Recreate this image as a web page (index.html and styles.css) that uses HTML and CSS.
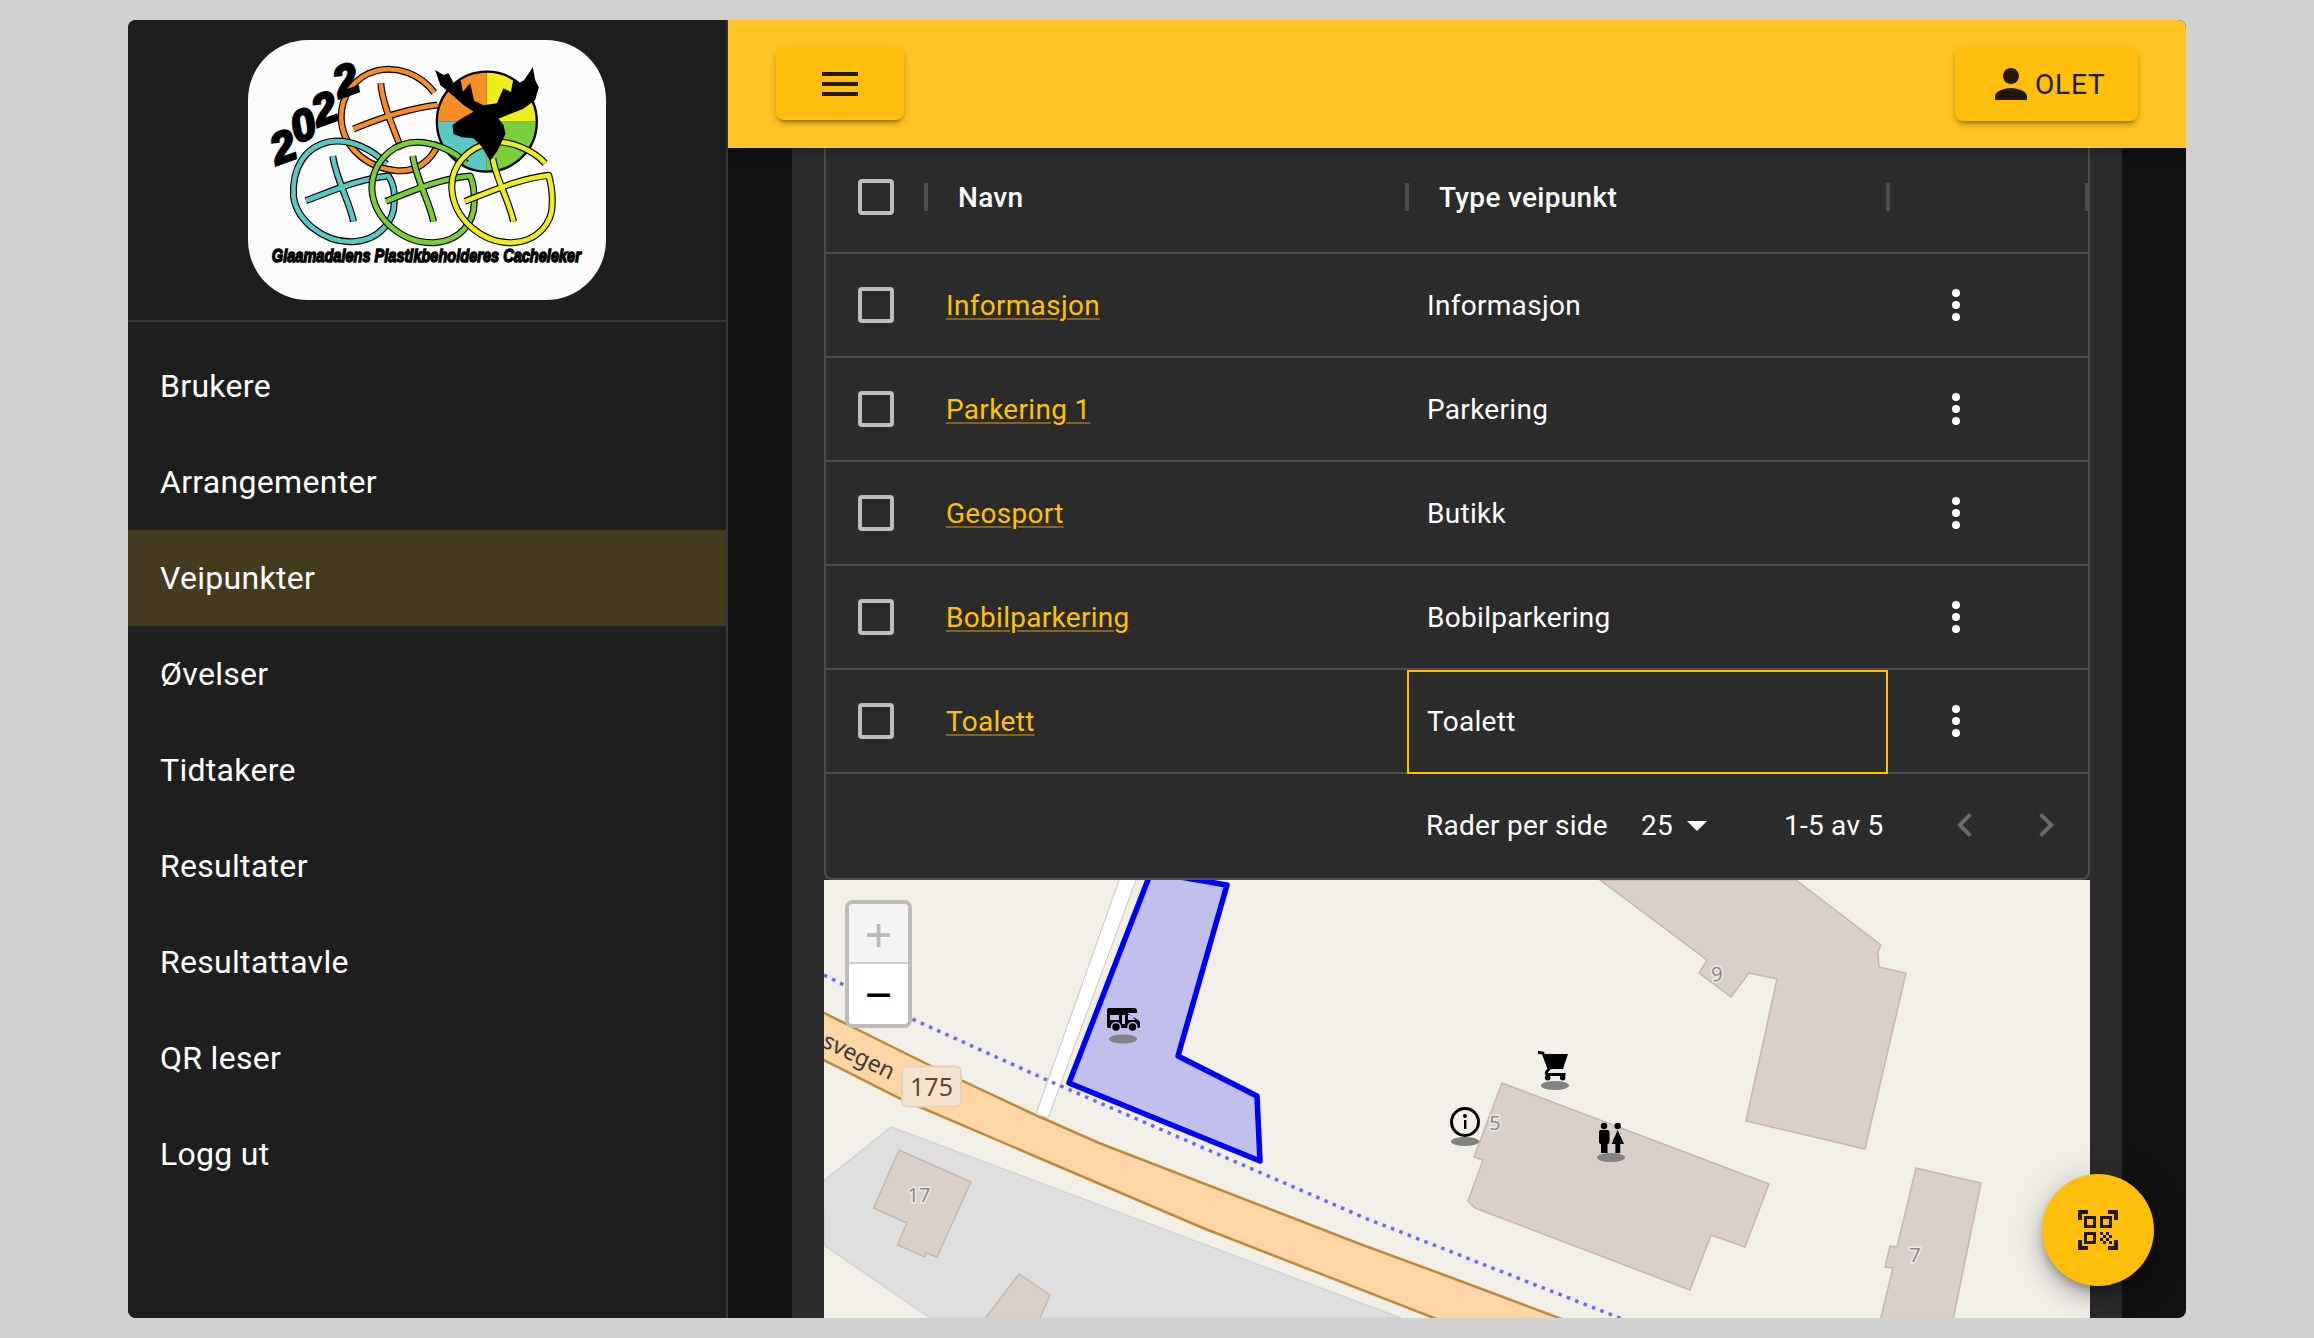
FILE: index.html
```html
<!DOCTYPE html>
<html lang="no">
<head>
<meta charset="utf-8">
<title>Veipunkter</title>
<link rel="stylesheet" href="styles.css">
</head>
<body>
<div class="app">
  <aside class="sidebar">
    <div class="logo-wrap">
      <div class="logo">
        <svg class="logo-svg" viewBox="24 30 1073 780" width="358" height="260" aria-label="Logo">
          <!-- wheel -->
          <ellipse cx="740" cy="275" rx="150" ry="150" class="lg-wheel-o"/>
          <path d="M740 275V125A150 150 0 0 0 590 275Z" class="f-orange"/>
          <path d="M740 275V125A150 150 0 0 1 890 275Z" class="f-yellow"/>
          <path d="M740 275H590A150 150 0 0 0 740 425Z" class="f-teal"/>
          <path d="M740 275H890A150 150 0 0 1 740 425Z" class="f-green"/>
          <ellipse cx="740" cy="275" rx="150" ry="150" class="lg-wheel-s"/>
          <!-- orange -->
          <g class="s-out">
            <path d="M582 188C540 130 470 108 410 122C340 140 303 200 303 262C305 345 372 412 470 422C530 426 572 392 597 338"/>
            <path d="M422 160C426 220 462 300 484 358"/><path d="M340 297C400 272 500 236 592 225"/>
          </g>
          <g class="s-in c-orange">
            <path d="M582 188C540 130 470 108 410 122C340 140 303 200 303 262C305 345 372 412 470 422C530 426 572 392 597 338"/>
            <path d="M422 160C426 220 462 300 484 358"/><path d="M340 297C400 272 500 236 592 225"/>
          </g>
          <!-- teal -->
          <g class="s-out">
            <path d="M438 402C400 360 330 325 270 335C190 350 155 420 160 500C170 570 250 640 340 635C420 630 462 570 462 520C465 490 460 460 445 438C360 445 270 485 197 512"/>
            <path d="M278 378C285 440 330 520 340 575"/>
          </g>
          <g class="s-in c-teal">
            <path d="M438 402C400 360 330 325 270 335C190 350 155 420 160 500C170 570 250 640 340 635C420 630 462 570 462 520C465 490 460 460 445 438C360 445 270 485 197 512"/>
            <path d="M278 378C285 440 330 520 340 575"/>
          </g>
          <!-- green -->
          <g class="s-out">
            <path d="M678 400C640 360 570 330 510 338C440 350 395 410 395 475C400 570 490 640 580 638C660 635 702 575 702 520C703 490 700 460 690 438C600 445 510 485 437 514"/>
            <path d="M518 378C525 440 570 520 580 575"/>
          </g>
          <g class="s-in c-green">
            <path d="M678 400C640 360 570 330 510 338C440 350 395 410 395 475C400 570 490 640 580 638C660 635 702 575 702 520C703 490 700 460 690 438C600 445 510 485 437 514"/>
            <path d="M518 378C525 440 570 520 580 575"/>
          </g>
          <!-- yellow -->
          <g class="s-out">
            <path d="M915 400C880 360 810 332 760 336C680 350 632 410 635 475C640 570 730 640 815 638C895 635 938 575 936 520C938 490 932 460 926 436C840 445 750 485 674 514"/>
            <path d="M758 385C765 440 810 520 820 575"/>
          </g>
          <g class="s-in c-yellow">
            <path d="M915 400C880 360 810 332 760 336C680 350 632 410 635 475C640 570 730 640 815 638C895 635 938 575 936 520C938 490 932 460 926 436C840 445 750 485 674 514"/>
            <path d="M758 385C765 440 810 520 820 575"/>
          </g>
          <!-- moose -->
          <polygon class="f-black" points="585,120 610,135 625,130 640,158 662,152 668,185 690,160 702,212 730,226 770,220 790,175 812,186 820,146 835,160 852,150 878,112 885,150 896,172 885,210 850,236 800,256 775,266 790,285 796,312 780,345 770,365 750,392 725,350 700,325 665,322 640,312 637,285 665,265 700,245 670,225 630,190 600,165"/>
          <text class="lg-year" x="110 170 234 298" y="405 340 290 205" rotate="-20">2022</text>
          <text class="lg-cap" transform="translate(95 696) scale(1 1.300)" textLength="927" lengthAdjust="spacingAndGlyphs">Glaamadalens Plastikbeholderes Cacheleker</text>
        </svg>
      </div>
    </div>
    <nav class="nav">
      <a class="nav-item">Brukere</a>
      <a class="nav-item">Arrangementer</a>
      <a class="nav-item active">Veipunkter</a>
      <a class="nav-item">Øvelser</a>
      <a class="nav-item">Tidtakere</a>
      <a class="nav-item">Resultater</a>
      <a class="nav-item">Resultattavle</a>
      <a class="nav-item">QR leser</a>
      <a class="nav-item">Logg ut</a>
    </nav>
  </aside>

  <main class="main">
    <header class="topbar">
      <button class="tb-btn menu-btn" aria-label="Meny">
        <svg class="icon48" viewBox="0 0 24 24"><path d="M3 18h18v-2H3v2zm0-5h18v-2H3v2zm0-7v2h18V6H3z"/></svg>
      </button>
      <button class="tb-btn user-btn">
        <svg class="icon48" viewBox="0 0 24 24"><path d="M12 12c2.21 0 4-1.79 4-4s-1.79-4-4-4-4 1.79-4 4 1.79 4 4 4zm0 2c-2.67 0-8 1.34-8 4v2h16v-2c0-2.66-5.33-4-8-4z"/></svg>
        <span>OLET</span>
      </button>
    </header>

    <div class="content">
      <section class="panel">
        <div class="table">
          <div class="row head">
            <div class="cell sep"><span class="check"></span></div>
            <div class="cell sep title">Navn</div>
            <div class="cell sep title">Type veipunkt</div>
            <div class="cell sep"></div>
          </div>
          <div class="row">
            <div class="cell"><span class="check"></span></div>
            <div class="cell text"><a class="link">Informasjon</a></div>
            <div class="cell text">Informasjon</div>
            <div class="cell actions"><svg class="icon48 white" viewBox="0 0 24 24"><circle cx="12" cy="6" r="2"/><circle cx="12" cy="12" r="2"/><circle cx="12" cy="18" r="2"/></svg></div>
          </div>
          <div class="row">
            <div class="cell"><span class="check"></span></div>
            <div class="cell text"><a class="link">Parkering 1</a></div>
            <div class="cell text">Parkering</div>
            <div class="cell actions"><svg class="icon48 white" viewBox="0 0 24 24"><circle cx="12" cy="6" r="2"/><circle cx="12" cy="12" r="2"/><circle cx="12" cy="18" r="2"/></svg></div>
          </div>
          <div class="row">
            <div class="cell"><span class="check"></span></div>
            <div class="cell text"><a class="link">Geosport</a></div>
            <div class="cell text">Butikk</div>
            <div class="cell actions"><svg class="icon48 white" viewBox="0 0 24 24"><circle cx="12" cy="6" r="2"/><circle cx="12" cy="12" r="2"/><circle cx="12" cy="18" r="2"/></svg></div>
          </div>
          <div class="row">
            <div class="cell"><span class="check"></span></div>
            <div class="cell text"><a class="link">Bobilparkering</a></div>
            <div class="cell text">Bobilparkering</div>
            <div class="cell actions"><svg class="icon48 white" viewBox="0 0 24 24"><circle cx="12" cy="6" r="2"/><circle cx="12" cy="12" r="2"/><circle cx="12" cy="18" r="2"/></svg></div>
          </div>
          <div class="row">
            <div class="cell"><span class="check"></span></div>
            <div class="cell text"><a class="link">Toalett</a></div>
            <div class="cell text focus">Toalett</div>
            <div class="cell actions"><svg class="icon48 white" viewBox="0 0 24 24"><circle cx="12" cy="6" r="2"/><circle cx="12" cy="12" r="2"/><circle cx="12" cy="18" r="2"/></svg></div>
          </div>
          <div class="pager">
            <span class="pg-label">Rader per side</span>
            <span class="pg-select">25<svg class="icon48 white" viewBox="0 0 24 24"><path d="M7 10l5 5 5-5z"/></svg></span>
            <span class="pg-range">1-5 av 5</span>
            <span class="pg-btn"><svg class="icon48 dim" viewBox="0 0 24 24"><path d="M15.41 7.41 14 6l-6 6 6 6 1.41-1.41L10.83 12z"/></svg></span>
            <span class="pg-btn"><svg class="icon48 dim" viewBox="0 0 24 24"><path d="M10 6 8.59 7.41 13.17 12l-4.58 4.59L10 18l6-6z"/></svg></span>
          </div>
        </div>

        <div class="map">
          <svg class="map-svg" viewBox="824 880 1266 438" width="1266" height="438">
            <polygon class="landuse" points="891,1127 1401,1318 930,1318 824,1245 824,1210 800,1200"/>
            <polygon class="bld" points="899,1150 971,1182 937,1257 926,1253 925,1257 897.5,1245 907,1223 873.6,1208"/>
            <polygon class="bld" points="1019,1274 1050,1295 1037,1325 980,1325"/>
            <polygon class="bld" points="1600,880 1796,880 1881,945 1878,952 1879,967 1906,973 1865,1149 1746,1121 1777,979 1749,973 1731,997 1699,973 1707,960"/>
            <polygon class="bld" points="1502,1083 1769,1184 1745,1247 1711,1235 1690,1290 1475,1208 1468,1201 1483,1160 1474,1157"/>
            <polygon class="bld" points="1916,1168 1981,1183 1952,1325 1879,1325 1893,1268 1885,1267 1890,1246 1897,1247"/>
            <polygon class="road" points="810,1006 931,1066 1031,1113 1099,1143 1360,1244 1447,1276 1575,1324 1470,1332 1203,1228 1039,1158 899,1098 810,1053"/>
            <polygon class="foot" points="1122,872 1139,872 1048,1118 1036,1114"/>
            <polyline class="dots" points="824,975 910,1018 1047,1080 1365,1218 1630,1322"/>
            <polygon class="area" points="1069,1083 1151,872 1227,885 1178,1056 1257,1096 1260,1161"/>
            <text class="lbl-road" transform="translate(890 1080) rotate(26)" text-anchor="end">esvegen</text>
            <rect class="shield" x="902" y="1066.500" width="59" height="40" rx="5"/>
            <text class="lbl-shield" x="931.500" y="1096" text-anchor="middle">175</text>
            <text class="lbl-no" x="919" y="1202" text-anchor="middle">17</text>
            <text class="lbl-no" x="1717" y="981" text-anchor="middle" transform="rotate(-4 1717 974)">9</text>
            <text class="lbl-no" x="1495" y="1130" text-anchor="middle">5</text>
            <text class="lbl-no" x="1915" y="1262" text-anchor="middle">7</text>
            <!-- markers -->
            <ellipse class="shadow" cx="1123" cy="1039" rx="14" ry="4.500"/>
            <ellipse class="shadow" cx="1465" cy="1141.500" rx="14" ry="4.500"/>
            <ellipse class="shadow" cx="1555" cy="1085.500" rx="14" ry="4.500"/>
            <ellipse class="shadow" cx="1611" cy="1157.500" rx="14" ry="4.500"/>
            <!-- camper -->
            <g class="mk">
              <path fill-rule="evenodd" d="M1109 1008H1134Q1137 1008 1137 1011V1013H1127L1138 1020Q1140 1021 1140 1023V1027Q1140 1028 1138 1028H1108Q1107 1028 1107 1026V1010Q1107 1008 1109 1008ZM1110 1015V1020H1119V1015ZM1122 1015V1024H1125V1015ZM1128 1015V1020H1135.500L1131 1015Z"/>
              <circle cx="1116" cy="1027" r="4.500" class="mk-ring"/>
              <circle cx="1132.500" cy="1027" r="4.500" class="mk-ring"/>
            </g>
            <!-- info -->
            <circle class="mk-info" cx="1465" cy="1122" r="13.500"/>
            <g class="mk">
              <circle cx="1465" cy="1116" r="2"/>
              <rect x="1464" y="1120" width="2.400" height="9"/>
            </g>
            <!-- cart -->
            <g class="mk">
              <polygon points="1544,1054 1568,1054 1563,1069 1548,1069"/>
              <path class="mk-line" d="M1538 1052.500L1543 1053L1549 1069L1546.500 1072Q1545.500 1074.500 1548 1074.500H1565.500"/>
              <circle cx="1547.700" cy="1077.700" r="2.800"/>
              <circle cx="1562.700" cy="1077.700" r="2.800"/>
            </g>
            <!-- wc -->
            <g class="mk">
              <circle cx="1604" cy="1126" r="3.200"/>
              <rect x="1599" y="1130" width="10.500" height="14" rx="2"/>
              <rect x="1601" y="1140" width="6.500" height="13"/>
              <circle cx="1617.700" cy="1126" r="3.200"/>
              <polygon points="1617.700,1130 1624,1144 1611.500,1144"/>
              <rect x="1615.400" y="1143" width="4.800" height="10"/>
            </g>
          </svg>
          <div class="zoom">
            <span class="zoom-btn off">+</span>
            <span class="zoom-btn">−</span>
          </div>
        </div>
      </section>
    </div>
  </main>

  <button class="fab" aria-label="QR">
    <svg class="icon48" viewBox="0 0 24 24"><path d="M9.5 6.5v3h-3v-3h3M11 5H5v6h6V5zm-1.500 9.500v3h-3v-3h3M11 13H5v6h6v-6zm6.500-6.500v3h-3v-3h3M19 5h-6v6h6V5zm-6 8h1.500v1.500H13V13zm1.500 1.500H16V16h-1.500v-1.500zM16 13h1.500v1.500H16V13zm-3 3h1.500v1.500H13V16zm1.500 1.500H16V19h-1.500v-1.500zM16 16h1.500v1.500H16V16zm1.500-1.500H19V16h-1.500v-1.500zm0 3H19V19h-1.500v-1.500zM22 7h-2V4h-3V2h5v5zm0 15v-5h-2v3h-3v2h5zM2 22h5v-2H4v-3H2v5zM2 2v5h2V4h3V2H2z"/></svg>
  </button>
</div>
</body>
</html>
```
FILE: styles.css
```css
* { box-sizing: border-box; }
html, body { margin: 0; height: 100%; }
body {
  background: #d1d1d1;
  font-family: Roboto, "Liberation Sans", sans-serif;
  padding: 20px 128px;
  overflow: hidden;
}
.app {
  position: relative;
  display: flex;
  width: 2058px;
  height: 1298px;
  border-radius: 8px;
  overflow: hidden;
  background: #121212;
}

/* sidebar */
.sidebar {
  width: 600px;
  flex: none;
  background: #1e1e1e;
  border-right: 2px solid #383838;
  color: #fff;
}
.logo-wrap {
  height: 302px;
  padding: 20px 0 0 120px;
  border-bottom: 2px solid #383838;
}
.logo {
  width: 358px;
  height: 260px;
  background: #fbfbfb;
  border-radius: 60px;
  overflow: hidden;
}
.logo-svg { display: block; }
.lg-wheel-o { fill: #000; }
.lg-wheel-s { fill: none; stroke: #000; stroke-width: 7; }
.f-orange { fill: #f68d26; }
.f-yellow { fill: #eded20; }
.f-teal { fill: #5bc8c4; }
.f-green { fill: #7bce3b; }
.f-black { fill: #000; }
.s-out path { fill: none; stroke: #000; stroke-width: 21; stroke-linecap: butt; stroke-linejoin: round; }
.s-in path { fill: none; stroke-width: 14; stroke-linecap: butt; stroke-linejoin: round; }
.c-orange path { stroke: #f68d26; }
.c-teal path { stroke: #5bc8c4; }
.c-green path { stroke: #7bce3b; }
.c-yellow path { stroke: #eded20; }
.lg-year {
  font-family: "Liberation Sans", sans-serif;
  font-weight: 700;
  font-style: italic;
  font-size: 130px;
  fill: #000;
  stroke: #000;
  stroke-width: 8;
}
.lg-cap {
  font-family: "Liberation Sans", sans-serif;
  font-weight: 700;
  font-style: italic;
  font-size: 44px;
  fill: #000;
  stroke: #000;
  stroke-width: 3.500;
}

.nav { padding: 16px 0; display: flex; flex-direction: column; }
.nav-item {
  height: 96px;
  display: flex;
  align-items: center;
  padding-left: 32px;
  font-size: 32px;
  line-height: 48px;
  letter-spacing: 0.3px;
}
.nav-item.active { background: #443a1e; }

/* main */
.main { flex: 1; min-width: 0; display: flex; flex-direction: column; }
.topbar {
  position: relative;
  z-index: 2;
  flex: none;
  height: 128px;
  padding: 0 48px;
  display: flex;
  align-items: center;
  justify-content: space-between;
  background: #ffc524;
  box-shadow: 0 4px 8px rgba(0, 0, 0, 0.3);
}
.tb-btn {
  display: flex;
  align-items: center;
  border: 0;
  border-radius: 8px;
  background: #ffbe0b;
  color: #211a01;
  font-family: Roboto, sans-serif;
  box-shadow: 0 6px 2px -4px rgba(0, 0, 0, 0.2), 0 4px 4px 0 rgba(0, 0, 0, 0.14), 0 2px 10px 0 rgba(0, 0, 0, 0.12);
}
.menu-btn { width: 128px; height: 72px; justify-content: center; padding: 0; }
.user-btn {
  width: 183px;
  height: 73px;
  padding: 0 0 0 32px;
  font-size: 28px;
  letter-spacing: 0.8px;
  font-weight: 400;
}
.icon48 { width: 48px; height: 48px; flex: none; display: block; fill: currentColor; }
.white { color: #fff; }
.dim { color: #686868; }

.content { flex: 1; min-height: 0; padding: 0 64px; }
.panel {
  height: 100%;
  background: #2b2b2b;
  padding: 0 32px;
  display: flex;
  flex-direction: column;
}
.table {
  flex: none;
  border: 2px solid #4d4d4d;
  border-top: 0;
  border-radius: 0 0 8px 8px;
  color: #fff;
  font-size: 28px;
  letter-spacing: 0.3px;
}
.row {
  display: grid;
  grid-template-columns: 100px 481px 481px 200px;
  height: 104px;
}
.row.head { height: 106px; }
.cell {
  position: relative;
  display: flex;
  align-items: center;
  border-bottom: 2px solid #4d4d4d;
}
.cell:first-child { justify-content: center; }
.head .cell { padding-bottom: 6px; }
.title { padding-left: 32px; font-weight: 500; }
.sep::after {
  content: "";
  position: absolute;
  right: -2px;
  top: 35px;
  width: 4px;
  height: 28px;
  background: #4d4d4d;
}
.head .cell:last-child::after { right: -1px; }
.check {
  display: block;
  width: 36px;
  height: 36px;
  border: 4px solid #bdbdbd;
  border-radius: 4px;
}
.text { padding-left: 20px; }
.link {
  color: #ffc107;
  text-decoration: underline;
  text-decoration-color: rgba(255, 193, 7, 0.4);
  text-decoration-thickness: 2px;
  text-underline-offset: 3px;
}
.focus { outline: 2px solid #ffbe0b; outline-offset: -2px; }
.actions { padding-left: 44px; }

.pager {
  height: 104px;
  display: flex;
  align-items: center;
  padding-left: 600px;
  padding-bottom: 2px;
  white-space: nowrap;
  letter-spacing: 0.25px;
}
.pager > span { flex: none; }
.pg-select { display: flex; align-items: center; margin-left: 33px; }
.pg-range { margin-left: 63px; }
.pg-btn { width: 81px; display: flex; justify-content: center; }
.pg-range + .pg-btn { margin-left: 41px; }

/* map */
.map {
  position: relative;
  flex: 1;
  min-height: 0;
  background: #f2efe9;
  overflow: hidden;
}
.map-svg { display: block; }
.landuse { fill: #dfdfdf; stroke: #d2d2d2; stroke-width: 1.500; }
.bld { fill: #d9d0c9; stroke: #c6b9ae; stroke-width: 1.500; }
.road { fill: #fcd6a4; stroke: #b98c3e; stroke-width: 2.500; }
.foot { fill: #fff; stroke: #c8c6c0; stroke-width: 1; }
.dots { fill: none; stroke: #6a6af8; stroke-width: 3.500; stroke-dasharray: 3.500 5.500; }
.area { fill: #c1bfec; stroke: #0000f5; stroke-width: 5.500; stroke-linejoin: round; }
.lbl-road { font-family: "Noto Sans", sans-serif; font-size: 23px; fill: #3a3a3a; }
.shield { fill: #f7e4ce; stroke: #e6d2b8; stroke-width: 2; }
.lbl-shield { font-family: "Noto Sans", sans-serif; font-size: 25px; fill: #5c4a36; }
.lbl-no {
  font-family: "Noto Sans", sans-serif;
  font-size: 20px;
  fill: #8a8a8a;
  stroke: #eeeae5;
  stroke-width: 3;
  paint-order: stroke;
}
.shadow { fill: #838383; }
.mk { fill: #000; }
.mk-ring { fill: #000; stroke: #c1bfec; stroke-width: 1.500; }
.mk-info { fill: #f2efe9; stroke: #000; stroke-width: 3; }
.mk-line { fill: none; stroke: #000; stroke-width: 2.800; }

.zoom {
  position: absolute;
  left: 21px;
  top: 20px;
  width: 67px;
  height: 128px;
  border: 4px solid #bfbcb8;
  border-radius: 8px;
  overflow: hidden;
  display: flex;
  flex-direction: column;
}
.zoom-btn {
  height: 60px;
  background: #fff;
  color: #000;
  display: flex;
  align-items: center;
  justify-content: center;
  font-family: "DejaVu Sans Mono", monospace;
  font-size: 44px;
  line-height: 1;
}
.zoom-btn.off {
  background: #f4f4f4;
  color: #bbb;
  border-bottom: 2px solid #ccc;
  padding-top: 2px;
}

.fab {
  position: absolute;
  right: 32px;
  bottom: 32px;
  width: 112px;
  height: 112px;
  border: 0;
  padding: 0;
  border-radius: 50%;
  background: #ffbe0b;
  color: #211a01;
  display: flex;
  align-items: center;
  justify-content: center;
  box-shadow: 0 6px 10px -2px rgba(0, 0, 0, 0.3), 0 12px 20px 2px rgba(0, 0, 0, 0.14), 0 4px 36px 4px rgba(0, 0, 0, 0.12);
}
```
